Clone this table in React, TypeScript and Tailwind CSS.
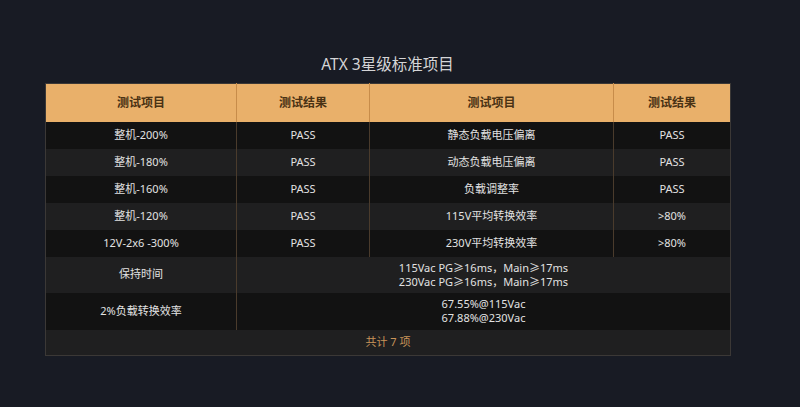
const rows = [
  { item: "整机-200%", result: "PASS", item2: "静态负载电压偏离", result2: "PASS" },
  { item: "整机-180%", result: "PASS", item2: "动态负载电压偏离", result2: "PASS" },
  { item: "整机-160%", result: "PASS", item2: "负载调整率", result2: "PASS" },
  { item: "整机-120%", result: "PASS", item2: "115V平均转换效率", result2: ">80%" },
  { item: "12V-2x6 -300%", result: "PASS", item2: "230V平均转换效率", result2: ">80%" },
];

const spanRows = [
  { item: "保持时间", lines: ["115Vac PG≥16ms，Main≥17ms", "230Vac PG≥16ms，Main≥17ms"] },
  { item: "2%负载转换效率", lines: ["67.55%@115Vac", "67.88%@230Vac"] },
];

export default function App() {
  return (
    <main
      className="w-[800px] h-[407px] bg-[#181b24] pt-[52px] pl-[45px]"
      style={{ fontFamily: '"Noto Sans", "Noto Sans CJK SC", sans-serif' }}
    >
      <div className="w-[685px]">
        {/* Title */}
        <h1 className="text-center text-[15.5px] leading-[24px] text-[#d4d4d6] mb-[7px]">
          ATX 3星级标准项目
        </h1>

        {/* Table */}
        <table className="w-[685px] table-fixed border-collapse border border-[#3b3836] text-[11px] text-[#e2e2e2]">
          <colgroup>
            <col className="w-[191px]" />
            <col className="w-[133px]" />
            <col className="w-[244px]" />
            <col className="w-[117px]" />
          </colgroup>
          <thead>
            <tr className="h-[38px] bg-[#e9b06a] text-[#4a3214] text-[12px] font-bold">
              <th className="border-r border-[#c78c4a]">测试项目</th>
              <th className="border-r border-[#c78c4a]">测试结果</th>
              <th className="border-r border-[#c78c4a]">测试项目</th>
              <th>测试结果</th>
            </tr>
          </thead>
          <tbody>
            {rows.map((r, i) => (
              <tr
                key={r.item}
                className={i % 2 === 0 ? "h-[27px] bg-[#121212]" : "h-[27px] bg-[#1f1f20]"}
              >
                <td className="text-center border-r border-[#4a3b2c]">{r.item}</td>
                <td className="text-center border-r border-[#4a3b2c]">{r.result}</td>
                <td className="text-center border-r border-[#4a3b2c]">{r.item2}</td>
                <td className="text-center">{r.result2}</td>
              </tr>
            ))}
            {spanRows.map((r, i) => (
              <tr
                key={r.item}
                className={i % 2 === 0 ? "h-[36px] bg-[#1f1f20]" : "h-[37px] bg-[#121212]"}
              >
                <td className="text-center border-r border-[#4a3b2c]">{r.item}</td>
                <td colSpan={3} className="text-center leading-[14px]">
                  {r.lines.map((l) => (
                    <div key={l}>{l}</div>
                  ))}
                </td>
              </tr>
            ))}
            <tr className="h-[26px] bg-[#1f1f20]">
              <td colSpan={4} className="text-center text-[#c99459]">
                共计 7 项
              </td>
            </tr>
          </tbody>
        </table>
      </div>
    </main>
  );
}
